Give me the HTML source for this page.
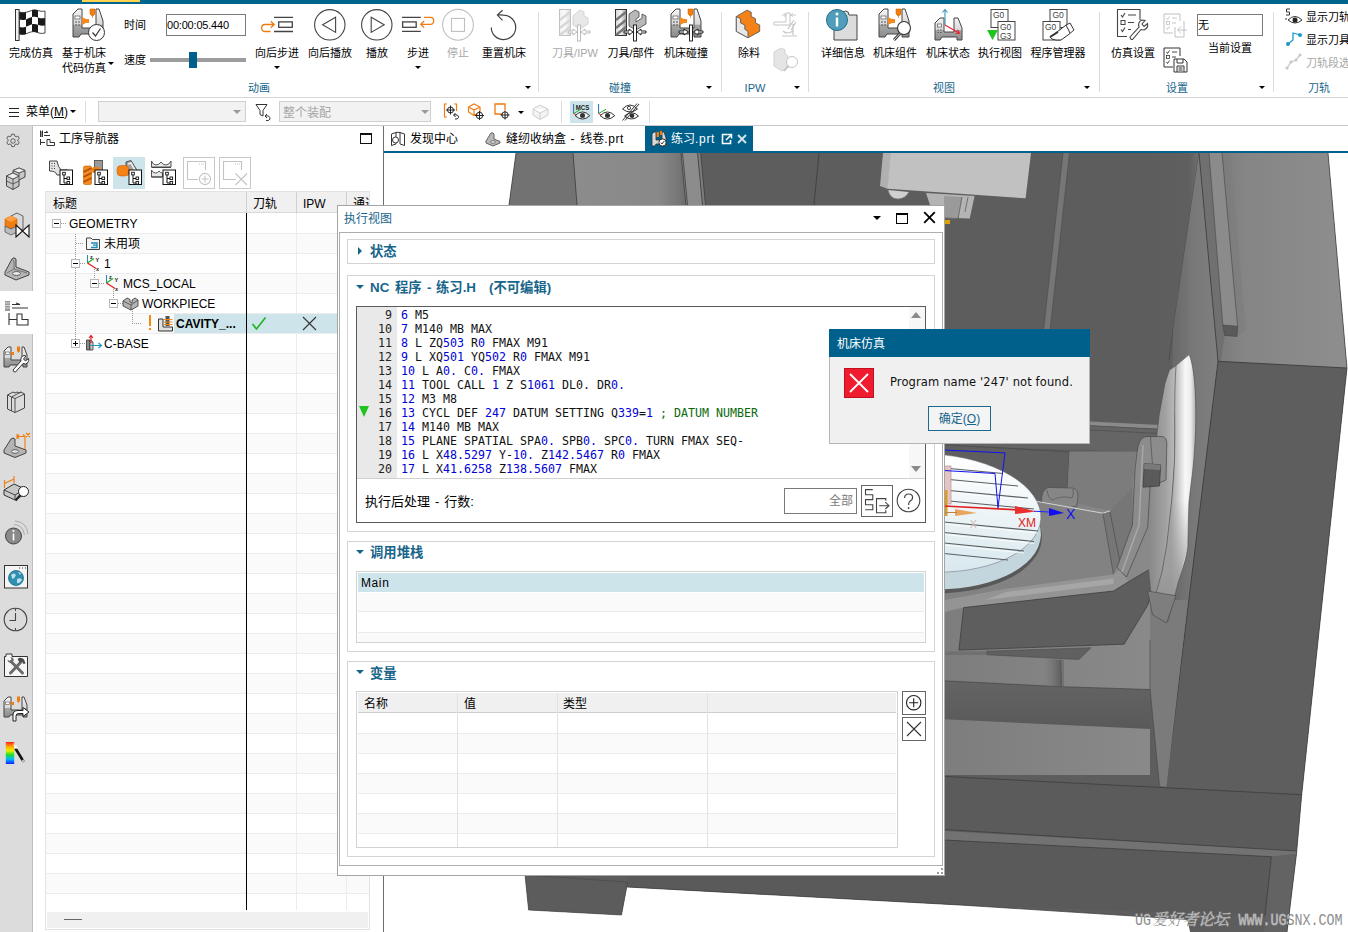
<!DOCTYPE html>
<html lang="zh-CN">
<head>
<meta charset="utf-8">
<title>NX - 机床仿真</title>
<style>
*{box-sizing:border-box;margin:0;padding:0}
html,body{width:1348px;height:932px;overflow:hidden;background:#fff}
body{position:relative;font-family:"Liberation Sans","Noto Sans CJK SC",sans-serif;font-size:12px;color:#000;line-height:1}
.a{position:absolute}
.t{position:absolute;white-space:nowrap;line-height:14px}
.c{position:absolute;white-space:nowrap;line-height:14px;text-align:center;transform:translateX(-50%)}
.rl{font-size:11px}
.teal{color:#17658a}
.gray{color:#a8a8a8}
svg{position:absolute;overflow:visible}
/* ribbon */
#topbar{left:0;top:0;width:1348px;height:4px;background:#00658c}
#topy{left:82px;top:0;width:58px;height:2px;background:#ffd350}
#ribbon{left:0;top:4px;width:1348px;height:94px;background:#fff;border-bottom:1px solid #d5d5d5}
.vsep{position:absolute;top:12px;width:1px;height:80px;background:#dcdcdc}
.dd{position:absolute;width:0;height:0;border-left:3px solid transparent;border-right:3px solid transparent;border-top:3px solid #000}
#toolbar{left:0;top:98px;width:1348px;height:28px;background:#fff;border-bottom:1px solid #c9c9c9}
.combo{position:absolute;top:101px;height:21px;background:#f2f2f2;border:1px solid #cfcfcf}
/* side */
#side{left:0;top:126px;width:33px;height:806px;background:#dcdcdc}
#nav{left:33px;top:126px;width:351px;height:806px;background:#fff}
/* tree */
.row{position:absolute;left:47px;width:323px;height:20px}
/* dialog */
#dlg{left:337px;top:205px;width:608px;height:671px;background:#fff;border:1px solid #a5a5a5}
.grp{position:absolute;border:1px solid #d4d4d4;background:#fff}
.gh{position:absolute;font-weight:bold;font-size:13.33px;color:#17658a;white-space:nowrap;line-height:16px}
.code{font-family:"DejaVu Sans Mono","Liberation Mono",monospace;font-size:11.63px;line-height:14px;white-space:pre}
.code b{font-weight:normal;color:#0000d8}
.code i{font-style:normal;color:#0a6a0a}
</style>
</head>
<body>

<div class="a" id="topbar"></div><div class="a" id="topy"></div>
<div class="a" id="ribbon"></div>
<svg width="0" height="0" style="left:0;top:0"><defs>
<linearGradient id="mg" x1="0" x2="0" y1="0" y2="1"><stop offset="0" stop-color="#f4f4f4"/><stop offset=".55" stop-color="#d8d8d8"/><stop offset=".56" stop-color="#a8a8a8"/><stop offset="1" stop-color="#8c8c8c"/></linearGradient>
<linearGradient id="og" x1="0" x2="1" y1="0" y2="1"><stop offset="0" stop-color="#ffa030"/><stop offset="1" stop-color="#e06000"/></linearGradient>
<linearGradient id="tg" x1="0" x2="1" y1="0" y2="0"><stop offset="0" stop-color="#d8d8d8"/><stop offset=".5" stop-color="#f2f2f2"/><stop offset="1" stop-color="#9a9a9a"/></linearGradient>
<g id="mach">
<path d="M1,29 V6 L6,1 H10 V20 H24 V1 H27 L31,13 V29 H24 V26 H9 L7,29 Z" fill="url(#mg)" stroke="#444" stroke-width="1"/>
<rect x="3" y="8" width="5" height="3" fill="#fff" stroke="#555" stroke-width=".7"/>
<path d="M3,14 H5 M6,14 H8 M3,17 H5 M6,17 H8" stroke="#555" stroke-width="1"/>
<path d="M18,1 H23 V6 L21,8 H20 L18,6 Z M20.5,8 V10" fill="#f07d10" stroke="#e06a00" stroke-width=".6"/>
<path d="M10,9 L14,11 L17,11 V15 L14,15 L10,17 Z" fill="#f58a20"/>
</g>
<g id="stair">
<path d="M3,8 L13,2 L17,4 V8 L21,10 V14 L25,16 V22 L14,28 L3,22 Z" fill="#f58216" stroke="#555" stroke-width=".8"/>
<path d="M3,8 L7,10 V14 L11,16 V20 L14,22 V28 L3,22 Z" fill="#e8e8e8" stroke="#555" stroke-width=".8"/>
</g>
</defs></svg>
<!-- group 1: animation -->
<svg style="left:14px;top:9px" width="32" height="32" viewBox="0 0 32 32"><rect x="1.5" y="0.5" width="3.6" height="31" fill="#f0f0f0" stroke="#333" stroke-width="1"/><path d="M5.5,3 C12,6 18,-1 24,1.5 C27,2.6 29,2.4 31,2 V24 C27,25 25,24 22,23 C16,21 12,27 5.5,25 Z" fill="#fff" stroke="#333" stroke-width=".9"/><path d="M5.5,3 C8,4 10,3.6 12,3 V10.4 C10,11 8,11.4 5.5,10.6 Z M12,10.4 C14,9.6 16,8.6 18,8 V15.2 C16,15.8 14,17 12,17.8 Z M18,8 V1 C20,0.7 22,0.8 24,1.5 V8.4 C22,7.6 20,7.5 18,8 Z M24,8.4 C26,9.2 28,9.6 31,9 V16.6 C28,17 26,16.6 24,15.8 Z M5.5,10.6 V18 C8,18.8 10,18.4 12,17.8 V25 C10,25.6 8,25.6 5.5,25 V18 M12,17.8 Z M18,15.2 C20,14.8 22,15 24,15.8 V23.6 C22,22.8 20,22.4 18,22.8 Z M5.5,18 C8,18.8 10,18.4 12,17.8 V25 C10,25.7 8,25.7 5.5,25 Z" fill="#1a1a1a"/></svg>
<div class="c rl" style="left:31px;top:46px">完成仿真</div>
<svg style="left:72px;top:8px" width="34" height="34" viewBox="0 0 34 34"><use href="#mach"/><circle cx="24.5" cy="24.5" r="8" fill="#fff" stroke="#333" stroke-width="1"/><path d="M20.5,24.5 L23.5,28 L28.5,20.5" fill="none" stroke="#333" stroke-width="1.2"/></svg>
<div class="c rl" style="left:84px;top:46px">基于机床</div>
<div class="c rl" style="left:84px;top:61px">代码仿真</div>
<div class="dd" style="left:108px;top:62px"></div>
<div class="t rl" style="left:124px;top:18px">时间</div>
<div class="a" style="left:166px;top:14px;width:80px;height:22px;border:1px solid #7a7a7a;background:#fff"></div>
<div class="t rl" style="left:167px;top:18px;letter-spacing:-.2px">00:00:05.440</div>
<div class="t rl" style="left:124px;top:53px">速度</div>
<div class="a" style="left:150px;top:58px;width:96px;height:4px;background:#9c9c9c"></div>
<div class="a" style="left:189px;top:52px;width:8px;height:16px;background:#00608c"></div>
<svg style="left:259px;top:9px" width="36" height="32" viewBox="259 9 36 32"><path d="M274,17.400 H293 M274,31.500 H293" stroke="#444" stroke-width="1.300"/><rect x="278.700" y="21.900" width="13.600" height="5.400" fill="none" stroke="#444" stroke-width="1.300"/><path d="M270.600,31.500 H265 Q261.700,31.500 261.700,28 Q261.700,24.500 265,24.500 H274 M270.800,21.200 L274.200,24.500 L270.800,27.800" fill="none" stroke="#ef7b10" stroke-width="1.300"/></svg>
<div class="c rl" style="left:277px;top:46px">向后步进</div>
<div class="dd" style="left:274px;top:66px"></div>
<svg style="left:314px;top:9px" width="32" height="32" viewBox="314 9 32 32"><circle cx="329.800" cy="24.800" r="15.200" fill="none" stroke="#444" stroke-width="1.100"/><path d="M335.600,17.300 V32.400 L322.600,24.800 Z" fill="none" stroke="#444" stroke-width="1.100"/></svg>
<div class="c rl" style="left:330px;top:46px">向后播放</div>
<svg style="left:361px;top:9px" width="32" height="32" viewBox="361 9 32 32"><circle cx="376.800" cy="24.800" r="15.200" fill="none" stroke="#444" stroke-width="1.100"/><path d="M371.200,17.300 V32.400 L384.200,24.800 Z" fill="none" stroke="#444" stroke-width="1.100"/></svg>
<div class="c rl" style="left:377px;top:46px">播放</div>
<svg style="left:400px;top:9px" width="36" height="32" viewBox="400 9 36 32"><path d="M402,17.300 H420.800 M402,31.300 H420.800" stroke="#444" stroke-width="1.300"/><rect x="402.600" y="21.900" width="13.600" height="5.400" fill="none" stroke="#444" stroke-width="1.300"/><path d="M424,17.300 H430.400 Q433.700,17.300 433.700,20.800 Q433.700,24.300 430.400,24.300 H421 M424.200,21 L420.800,24.300 L424.200,27.600" fill="none" stroke="#ef7b10" stroke-width="1.300"/></svg>
<div class="c rl" style="left:418px;top:46px">步进</div>
<div class="dd" style="left:415px;top:66px"></div>
<svg style="left:442px;top:9px" width="32" height="32" viewBox="442 9 32 32"><circle cx="458" cy="24.800" r="15.400" fill="none" stroke="#c0c0c0" stroke-width="1.100"/><rect x="451.500" y="18.400" width="13" height="13" fill="none" stroke="#c0c0c0" stroke-width="1.100"/></svg>
<div class="c rl gray" style="left:458px;top:46px">停止</div>
<svg style="left:488px;top:9px" width="32" height="34" viewBox="488 9 32 34"><path d="M502.500,10.300 L497.400,15.100 L502.500,20.400 M497.600,15.100 C500,14.700 502,15 503.500,15.200 A12.200,12.200 0 1 1 491.300,27.400" fill="none" stroke="#444" stroke-width="1.200"/></svg>
<div class="c rl" style="left:504px;top:46px">重置机床</div>
<div class="c rl teal" style="left:259px;top:81px">动画</div>
<div class="dd" style="left:525px;top:86px"></div>
<div class="vsep" style="left:538px"></div>
<!-- group 2: collision -->
<svg style="left:558px;top:8px;opacity:.33" width="34" height="34" viewBox="0 0 34 34"><rect x="1.5" y="1.5" width="11" height="26" fill="url(#tg)" stroke="#444"/><path d="M2,12 L12,4 M2,20 L12,12 M2,27 L12,19" stroke="#888" stroke-width="2.4"/><path d="M15,8 L22,2 L26,4 V8 L30,10 V16 L22,21 L15,17 Z" fill="#bbb" stroke="#666" stroke-width=".8"/><rect x="19.5" y="17" width="3" height="16" fill="#fff" stroke="#222" stroke-width=".9"/><path d="M10,23 H15 V21 L19,24 L15,27 V25 H10 Z M32,23 H27 V21 L23,24 L27,27 V25 H32 Z" fill="#fff" stroke="#222" stroke-width=".9"/></svg>
<div class="c rl gray" style="left:575px;top:46px">刀具/IPW</div>
<svg style="left:614px;top:8px" width="34" height="34" viewBox="0 0 34 34"><rect x="1.5" y="1.5" width="11" height="26" fill="url(#tg)" stroke="#333"/><path d="M2,12 L12,4 M2,20 L12,12 M2,27 L12,19" stroke="#777" stroke-width="2.4"/><path d="M15,6 L21,2 L25,4 V9 L22,11 V14 L28,10 V6 L32,8 V16 L22,22 L15,18 Z" fill="#b8b8b8" stroke="#444" stroke-width=".8"/><rect x="19.5" y="17" width="3" height="16" fill="#fff" stroke="#111" stroke-width=".9"/><path d="M10,23 H15 V21 L19,24 L15,27 V25 H10 Z M32,23 H27 V21 L23,24 L27,27 V25 H32 Z" fill="#fff" stroke="#111" stroke-width=".9"/></svg>
<div class="c rl" style="left:631px;top:46px">刀具/部件</div>
<svg style="left:670px;top:8px" width="34" height="34" viewBox="0 0 34 34"><use href="#mach"/><rect x="19.5" y="17" width="3" height="16" fill="#fff" stroke="#111" stroke-width=".9"/><path d="M9,23 H14 V21 L18.5,24 L14,27 V25 H9 Z M33,23 H28 V21 L23.5,24 L28,27 V25 H33 Z" fill="#fff" stroke="#111" stroke-width=".9"/></svg>
<div class="c rl" style="left:686px;top:46px">机床碰撞</div>
<div class="c rl teal" style="left:620px;top:81px">碰撞</div>
<div class="dd" style="left:706px;top:86px"></div>
<div class="vsep" style="left:721px"></div>
<!-- group 3: IPW -->
<svg style="left:733px;top:8px" width="30" height="34" viewBox="0 0 28 32"><use href="#stair"/></svg>
<div class="c rl" style="left:749px;top:46px">除料</div>
<svg style="left:773px;top:12px;opacity:.3" width="26" height="26" viewBox="0 0 26 26"><path d="M1,10 H13 V1 H17 V13 H1 Z" fill="#fff" stroke="#444"/><path d="M9,3 H13 M17,3 H23 M11,1.5 L13,3 L11,4.5 M20,1.5 L18,3 L20,4.5" stroke="#444" fill="none" stroke-width=".9"/><path d="M21,8 L15,17 M23,10 L18,18 M10,19 Q14,23 20,19 M9,24 H24 M20,12 V23" stroke="#444" fill="none" stroke-width="1.2"/></svg>
<svg style="left:773px;top:46px;opacity:.3" width="28" height="28" viewBox="0 0 28 28"><path d="M1,6 L8,2 L12,4 V8 L15,10 V14 L18,15 V20 L9,25 L1,20 Z" fill="#aaa" stroke="#555" stroke-width=".8"/><circle cx="19" cy="16" r="5.5" fill="#fff" stroke="#444" stroke-width="1"/><path d="M15,20 L11,25" stroke="#444" stroke-width="2"/></svg>
<div class="c rl teal" style="left:755px;top:81px">IPW</div>
<div class="dd" style="left:794px;top:86px"></div>
<div class="vsep" style="left:808px"></div>
<!-- group 4: view -->
<svg style="left:826px;top:8px" width="34" height="34" viewBox="0 0 34 34"><path d="M8,7 H16 Q16,3 19.5,3 Q23,3 23,7 H31 V32 H8 V22 Q12,22 12,18.5 Q12,15 8,15 Z" fill="#dcdcdc" stroke="#444" stroke-width="1"/><circle cx="11" cy="12" r="10.5" fill="#4f9db8" stroke="#1e6d8c" stroke-width="1"/><rect x="9.8" y="9.5" width="2.4" height="9" fill="#fff"/><circle cx="11" cy="6" r="1.5" fill="#fff"/></svg>
<div class="c rl" style="left:843px;top:46px">详细信息</div>
<svg style="left:878px;top:8px" width="36" height="34" viewBox="0 0 36 34"><use href="#mach"/><circle cx="26" cy="20" r="6.5" fill="#fff" stroke="#333" stroke-width="1.1"/><path d="M22,25.5 L16,32" stroke="#333" stroke-width="2.6"/><path d="M22,25.5 L16,32" stroke="#fff" stroke-width=".9"/></svg>
<div class="c rl" style="left:895px;top:46px">机床组件</div>
<svg style="left:934px;top:8px" width="30" height="34" viewBox="0 0 30 34"><path d="M1,32 V15 L6,10 H10 V24 H20 V10 H24 L28,20 V32 H23 V29 H8 L6,32 Z" fill="url(#mg)" stroke="#444" stroke-width="1"/><rect x="3.5" y="16" width="4" height="3" fill="#fff" stroke="#555" stroke-width=".7"/><path d="M3.5,22 H5 M6,22 H7.5 M3.5,24.500 H5 M6,24.500 H7.5" stroke="#555" stroke-width=".9"/><path d="M11,17 V2 M8.500,4.500 L11,1.500 L13.500,4.500" stroke="#3b96b8" stroke-width="1.100" fill="none"/><path d="M11,17 L25,25 M21.500,25.500 L25.500,25.300 L23.500,21.800" stroke="#e82030" stroke-width="1.100" fill="none"/></svg>
<div class="c rl" style="left:948px;top:46px">机床状态</div>
<svg style="left:986px;top:8px" width="32" height="34" viewBox="0 0 32 34"><rect x="5" y="1.500" width="17" height="18" fill="#fff" stroke="#444" stroke-width="1"/><text x="7" y="10" font-family="Liberation Sans,sans-serif" font-size="8.500" fill="#444">G0</text><rect x="12" y="13.500" width="17" height="18.500" fill="#fff" stroke="#444" stroke-width="1"/><text x="14" y="22" font-family="Liberation Sans,sans-serif" font-size="8.500" fill="#444">G0</text><text x="14" y="30.500" font-family="Liberation Sans,sans-serif" font-size="8.500" fill="#444">G3</text><path d="M1,22 H12 L6.500,32 Z" fill="#1fc41f"/></svg>
<div class="c rl" style="left:1000px;top:46px">执行视图</div>
<svg style="left:1041px;top:8px" width="34" height="34" viewBox="0 0 34 34"><rect x="9" y="1.500" width="17" height="18" fill="#fff" stroke="#444" stroke-width="1"/><text x="11.500" y="10" font-family="Liberation Sans,sans-serif" font-size="8.500" fill="#444">G0</text><rect x="2" y="13.500" width="17" height="18.500" fill="#fff" stroke="#444" stroke-width="1"/><text x="4" y="22" font-family="Liberation Sans,sans-serif" font-size="8.500" fill="#444">G0</text><path d="M9,29 L20,21 L25,17 L29,15 L33,22 L27,27 L20,32 L15,32 L11,31 Z" fill="#fff" stroke="#333" stroke-width="1"/><path d="M25,17 L29,25" stroke="#333" stroke-width="1"/><path d="M9,29 L17,24" stroke="#333" stroke-width="2"/></svg>
<div class="c rl" style="left:1058px;top:46px">程序管理器</div>
<div class="c rl teal" style="left:944px;top:81px">视图</div>
<div class="dd" style="left:1084px;top:86px"></div>
<div class="vsep" style="left:1099px"></div>
<!-- group 5: settings -->
<svg style="left:1116px;top:8px" width="34" height="34" viewBox="0 0 34 34"><path d="M24,12 V1.500 H1.500 V28.500 H11" fill="none" stroke="#444" stroke-width="1.100"/><path d="M5,7 L6.500,9 L9,5 M12,7 H20 M12,14.500 H18 M5,21.500 L6.500,23.500 L9,19.500 M12,21.500 H15" stroke="#444" stroke-width="1.100" fill="none"/><rect x="5" y="12.500" width="4" height="4" fill="none" stroke="#444" stroke-width="1"/><path d="M14,29 L23,19 Q21.500,14 26,12 L29,12.500 L26,16 L28,18.500 L31.500,15.500 Q32.500,20 28,22 L25,21.500 L16.500,31.500 Q14.500,32 14,29 Z" fill="#fff" stroke="#444" stroke-width="1.100"/></svg>
<div class="c rl" style="left:1133px;top:46px">仿真设置</div>
<svg style="left:1163px;top:13px;opacity:.32" width="26" height="26" viewBox="0 0 26 26"><path d="M17,8 V1 H1 V20 H10" fill="none" stroke="#444"/><path d="M3.500,5 L4.500,6.500 L6.500,3.500 M9,5 H14 M9,10 H13 M3.500,15 L4.500,16.500 L6.500,13.500" stroke="#444" fill="none" stroke-width=".9"/><rect x="3.500" y="8.500" width="3" height="3" fill="none" stroke="#444" stroke-width=".8"/><path d="M21,8 V24 H12 V14 M24,17 H15 M18,13.500 L14.500,17 L18,20.500" fill="none" stroke="#444"/></svg>
<svg style="left:1163px;top:47px" width="26" height="26" viewBox="0 0 26 26"><path d="M17,9 V1 H1 V20 H10" fill="none" stroke="#333"/><path d="M3.500,5 L4.500,6.500 L6.500,3.500 M9,5 H14 M9,10 H13 M3.500,15 L4.500,16.500 L6.500,13.500" stroke="#333" fill="none" stroke-width=".9"/><rect x="3.500" y="8.500" width="3" height="3" fill="none" stroke="#333" stroke-width=".8"/><path d="M11,12 H21 L24,15 V25 H11 Z M14,12 V16 H20 V12 M14,25 V19 H21 V25 M15.500,21 H19.500 M15.500,23 H19.500" fill="#fff" stroke="#333"/></svg>
<div class="a" style="left:1197px;top:14px;width:66px;height:22px;border:1px solid #7a7a7a;background:#fff"></div>
<div class="t rl" style="left:1198px;top:18px">无</div>
<div class="c rl" style="left:1230px;top:41px">当前设置</div>
<div class="c rl teal" style="left:1177px;top:81px">设置</div>
<div class="dd" style="left:1259px;top:86px"></div>
<div class="vsep" style="left:1273px"></div>
<!-- group 6: toolpath -->
<svg style="left:1284px;top:7px" width="20" height="20" viewBox="0 0 20 20"><path d="M6,2 H2.500 V5 H5.500 V8 H2" fill="none" stroke="#333" stroke-width="1"/><path d="M4,13 Q11,6 18,13 Q11,19 4,13 Z" fill="#fff" stroke="#333" stroke-width="1"/><circle cx="11" cy="13" r="2.500" fill="#222"/><path d="M2,11 V13" stroke="#333"/></svg>
<div class="t rl" style="left:1306px;top:10px">显示刀轨</div>
<svg style="left:1284px;top:30px" width="20" height="20" viewBox="0 0 20 20"><path d="M4,14 L9,10 V3 L16,5" fill="none" stroke="#1b9ac8" stroke-width="1.300"/><circle cx="4" cy="14" r="2" fill="#1b9ac8"/><circle cx="16" cy="5" r="2" fill="#1b9ac8"/></svg>
<div class="t rl" style="left:1306px;top:33px">显示刀具</div>
<svg style="left:1284px;top:52px;opacity:.35" width="20" height="20" viewBox="0 0 20 20"><path d="M3,16 L7,10 L12,8 L16,3" fill="none" stroke="#666" stroke-width="1.300"/><circle cx="3" cy="16" r="1.600" fill="#666"/><circle cx="7" cy="10" r="1.600" fill="#666"/><circle cx="12" cy="8" r="1.600" fill="#666"/><circle cx="16" cy="3" r="1.600" fill="#666"/></svg>
<div class="t rl gray" style="left:1306px;top:56px">刀轨段选</div>
<div class="c rl teal" style="left:1319px;top:81px">刀轨</div>

<div class="a" id="toolbar"></div>
<div class="a" style="left:9px;top:108px;width:10px;height:1px;background:#222;box-shadow:0 4px 0 #222,0 8px 0 #222"></div>
<div class="t" style="left:26px;top:105px">菜单(<span style="text-decoration:underline">M</span>)</div>
<div class="dd" style="left:70px;top:110px"></div>
<div class="a" style="left:85px;top:101px;width:1px;height:22px;background:#dcdcdc"></div>
<div class="combo" style="left:98px;width:148px"></div>
<div class="dd" style="left:233px;top:110px;border-top-color:#9a9a9a;border-left-width:4px;border-right-width:4px;border-top-width:4px"></div>
<svg style="left:254px;top:102px" width="20" height="20" viewBox="0 0 20 20"><path d="M2,2.500 H13 L9,8.500 V14 L6,12.500 V8.500 Z" fill="none" stroke="#333" stroke-width="1"/><path d="M11,14 Q16,13 16,17 Q15.500,19 12,18.500 M13,12 L11,14 L13,16" fill="none" stroke="#333" stroke-width="1"/></svg>
<div class="combo" style="left:279px;width:152px"></div>
<div class="t" style="left:283px;top:106px;color:#a6a6a6">整个装配</div>
<div class="dd" style="left:421px;top:110px;border-top-color:#9a9a9a;border-left-width:4px;border-right-width:4px;border-top-width:4px"></div>
<svg style="left:443px;top:102px" width="20" height="20" viewBox="0 0 20 20"><path d="M4,2 H1.500 V15 H4 M11,2 H13.500 V9" fill="none" stroke="#ef7b10" stroke-width="1.200"/><circle cx="7.500" cy="8" r="3" fill="none" stroke="#222" stroke-width="1"/><path d="M7.500,3.500 V12.500 M3,8 H12" stroke="#222" stroke-width="1"/><path d="M11,13 Q15.500,12 15.500,15.500 Q15,17.500 12,17 M12.500,11 L10.500,13 L12.500,15" fill="none" stroke="#222" stroke-width="1"/></svg>
<svg style="left:467px;top:102px" width="20" height="20" viewBox="0 0 20 20"><path d="M1.500,5 L7,2 L13,5 V10 L7,13.500 L1.500,10 Z M1.500,5 L7,8 L13,5 M7,8 V13.500" fill="none" stroke="#ef7b10" stroke-width="1.200"/><circle cx="12.500" cy="13.500" r="3.200" fill="#fff" stroke="#222" stroke-width="1"/><path d="M12.500,9 V18 M8,13.500 H17" stroke="#222" stroke-width="1"/></svg>
<svg style="left:493px;top:102px" width="20" height="20" viewBox="0 0 20 20"><path d="M9,12 H2 V2 H12 V8" fill="none" stroke="#ef7b10" stroke-width="1.300"/><circle cx="12" cy="13" r="3.200" fill="#fff" stroke="#222" stroke-width="1"/><path d="M12,8.500 V17.500 M7.500,13 H16.500" stroke="#222" stroke-width="1"/></svg>
<div class="dd" style="left:518px;top:111px"></div>
<svg style="left:532px;top:103px;opacity:.35" width="18" height="18" viewBox="0 0 18 18"><path d="M1,6 L8,2 L16,6 V12 L8,16.500 L1,12 Z M1,6 L8,10 L16,6 M8,10 V16.500" fill="#ddd" stroke="#777" stroke-width="1"/></svg>
<div class="a" style="left:561px;top:101px;width:1px;height:22px;background:#dcdcdc"></div>
<div class="a" style="left:570px;top:101px;width:23px;height:22px;background:#cde4ea"></div>
<svg style="left:571px;top:102px" width="22" height="20" viewBox="0 0 22 20"><text x="4.800" y="8" font-family="Liberation Sans,sans-serif" font-size="6.500" font-weight="bold" fill="#222" textLength="13.500" lengthAdjust="spacingAndGlyphs">MCS</text><path d="M2.600,2 V11.500" stroke="#2a6ab0" stroke-width="1"/><path d="M2.600,11.500 L10,7.300" stroke="#1fb41f" stroke-width="1"/><path d="M2.600,11.500 L5.400,13.200" stroke="#e02020" stroke-width="1"/><path d="M4.200,13.700 Q11.400,6.200 18.800,13.700 Q11.400,20.400 4.200,13.700 Z" fill="#fff" fill-opacity=".6" stroke="#333" stroke-width="1"/><circle cx="11.500" cy="13.500" r="2.500" fill="#333"/></svg>
<svg style="left:596px;top:102px" width="22" height="20" viewBox="0 0 22 20"><path d="M2.600,2 V11.500" stroke="#2a6ab0" stroke-width="1"/><path d="M2.600,11.500 L10,7.300" stroke="#1fb41f" stroke-width="1"/><path d="M2.600,11.500 L5.400,13.200" stroke="#e02020" stroke-width="1"/><path d="M4.200,13.700 Q11.400,6.200 18.800,13.700 Q11.400,20.400 4.200,13.700 Z" fill="#fff" stroke="#333" stroke-width="1"/><circle cx="11.500" cy="13.500" r="2.500" fill="#333"/></svg>
<svg style="left:621px;top:102px" width="20" height="20" viewBox="0 0 20 20"><path d="M1.500,7 Q9,-1 16.500,7 Q9,13 1.500,7 Z" fill="none" stroke="#333" stroke-width="1"/><circle cx="8" cy="6" r="1.600" fill="none" stroke="#333" stroke-width=".9"/><path d="M3.500,14 Q10.500,7.500 17.500,14 Q10.500,20 3.500,14 Z" fill="#fff" stroke="#333" stroke-width="1"/><circle cx="11" cy="13.800" r="2.300" fill="#333"/><path d="M1.500,18.500 L16,1.500 M4,18.500 L18,2" stroke="#333" stroke-width="1"/></svg>
<div class="a" style="left:649px;top:101px;width:1px;height:22px;background:#dcdcdc"></div>

<div class="a" id="side"></div>
<div class="a" style="left:32px;top:126px;width:1px;height:806px;background:#bdbdbd"></div>
<div class="a" style="left:0;top:291px;width:34px;height:43px;background:#fff"></div>
<svg style="left:5px;top:133px" width="16" height="16" viewBox="0 0 20 20"><path d="M8.300,1.500 h3.400 l.5,2.300 l1.700,.9 l2.200,-.9 l1.700,2.900 l-1.700,1.500 v2 l1.700,1.500 l-1.700,2.900 l-2.200,-.9 l-1.700,.9 l-.5,2.300 h-3.400 l-.5,-2.300 l-1.700,-.9 l-2.200,.9 l-1.700,-2.900 l1.700,-1.500 v-2 l-1.700,-1.500 l1.700,-2.900 l2.200,.9 l1.700,-.9 Z" fill="none" stroke="#444" stroke-width="1"/><circle cx="10" cy="10" r="2.800" fill="none" stroke="#444" stroke-width="1"/></svg>
<svg style="left:5px;top:167px" width="22" height="24" viewBox="0 0 22 24"><path d="M1.500,9 L8,6 L8,3.500 L14,1 L20,3.500 V10 L14,13 V19 L8,22.500 L1.500,19 Z" fill="#c8c8c8" stroke="#444" stroke-width="1"/><path d="M1.500,9 L8,12 L14,9 L8,6 M8,12 V22.500 M14,9 V13 M8,3.500 L14,6 L20,3.500 M14,6 V9 M1.500,14 L8,17 L14,14" fill="none" stroke="#444" stroke-width=".8"/><path d="M8,3.500 L14,1 L20,3.500 L14,6 Z M1.500,9 L8,6 L14,9 L8,12 Z" fill="#eee" stroke="#444" stroke-width=".8"/></svg>
<svg style="left:3px;top:211px" width="28" height="28" viewBox="0 0 28 28"><path d="M8,5 L14,2 L20,5 V18 L14,21 L8,18" fill="#d8d8d8" stroke="#555" stroke-width=".9"/><path d="M2,8 L8,5 L14,8 V15 L8,18 L2,15 Z" fill="#f07d10" stroke="#c86000" stroke-width=".6"/><path d="M2,8 L8,5 L14,8 L8,11 Z" fill="#ffa040"/><path d="M2,15 L8,18 L14,15 V21 L8,24 L2,21 Z" fill="#bcbcbc" stroke="#555" stroke-width=".8"/><path d="M13,14 V26 L26,14 V26 Z" fill="#fff" stroke="#111" stroke-width="1.100"/></svg>
<svg style="left:3px;top:255px" width="28" height="26" viewBox="0 0 28 26"><path d="M2,17 L9,4 Q11,1.500 13,4 V12 L26,17 V20 L13,25 L2,20 Z" fill="#b4b4b4" stroke="#444" stroke-width="1"/><path d="M9,4 L11,6 V14 L4,18 M11,14 L24,18" fill="none" stroke="#666" stroke-width=".8"/><ellipse cx="13.500" cy="18.500" rx="4" ry="2" fill="#e8e8e8" stroke="#444" stroke-width=".8"/></svg>
<svg style="left:4px;top:300px" width="26" height="26" viewBox="0 0 26 26"><rect x="1" y="1" width="5" height="10" fill="#999"/><path d="M1,3 h5 M1,5.500 h5 M1,8 h5" stroke="#ddd" stroke-width=".9"/><path d="M8,4.500 H16 L12,3 M8,8 H24 M5,13 V25 M5,19.500 H13 M13,25 V14 H18 V19.500 H24 V25 Z" fill="none" stroke="#333" stroke-width="1.100"/></svg>
<svg style="left:3px;top:345px" width="28" height="28" viewBox="0 0 28 28"><path d="M1,22 V6 L5,2 H8 V15 H19 V2 H21 L24,10 V22 H20 V20 H7 L6,22 Z" fill="url(#mg)" stroke="#444" stroke-width="1"/><rect x="2.500" y="7" width="4" height="2.500" fill="#fff" stroke="#555" stroke-width=".6"/><path d="M8,7 H11 V10 H8 M14,1.500 H17 V6 L15.500,8 L14,6 Z" fill="#f07d10"/><path d="M10,25 L18,16 Q17,12 21,10.500 L23,11 L20.500,14 L22.500,16 L25.500,13.500 Q26.500,17.500 22.500,19 L20,18.500 L12.500,27 Q10.500,27.500 10,25 Z" fill="#fff" stroke="#333" stroke-width="1"/></svg>
<svg style="left:6px;top:389px" width="20" height="25" viewBox="0 0 20 25"><path d="M1.500,6 L7,3 L9,4 L11,3 L13,4 L15,3 L18.500,5 V19 L9,23.500 L1.500,20 Z" fill="#dcdcdc" stroke="#444" stroke-width="1"/><path d="M1.500,6 L5.500,8 V22 M5.500,8 L9,9.500 V23.500 M9,9.500 L18.500,5 M5.500,8 L15,3" fill="none" stroke="#444" stroke-width=".9"/></svg>
<svg style="left:3px;top:431px" width="28" height="28" viewBox="0 0 28 28"><path d="M1,19 L8,8 Q10,6 12,8 V15 L23,19 V22 L12,26.500 L1,22 Z" fill="#b4b4b4" stroke="#444" stroke-width="1"/><ellipse cx="12" cy="20.500" rx="3.600" ry="1.800" fill="#e8e8e8" stroke="#444" stroke-width=".8"/><path d="M14,3 V8 M14,5.500 H22 M22,5.500 V18 M16,3.500 L14,5.500 L16,7.500 M20,3.500 L22,5.500 M23,2 L27,6 M27,2 L23,6" fill="none" stroke="#f07d10" stroke-width="1.100"/></svg>
<svg style="left:3px;top:475px" width="28" height="28" viewBox="0 0 28 28"><path d="M1,15 L11,9 L22,14 V19 L12,25 L1,20 Z" fill="#c8c8c8" stroke="#333" stroke-width="1"/><path d="M1,15 L12,20 L22,14 M12,20 V25" fill="none" stroke="#333" stroke-width=".9"/><path d="M1.500,5 V13 M11,1 V8 M1.500,8.500 L11,4" fill="none" stroke="#f07d10" stroke-width="1.100"/><circle cx="20.500" cy="16.500" r="5" fill="#fff" stroke="#222" stroke-width="1"/><path d="M17,20.500 L12.500,25.500" stroke="#222" stroke-width="2.200"/></svg>
<svg style="left:3px;top:519px" width="28" height="28" viewBox="0 0 28 28"><circle cx="10.500" cy="17" r="8" fill="#8a8a8a" stroke="#444" stroke-width="1"/><rect x="9.700" y="14.500" width="1.600" height="7" fill="#fff"/><circle cx="10.500" cy="12" r="1.100" fill="#fff"/><path d="M11,5.500 Q20,6 21.500,16 M12,2 Q24,3 25,15" fill="none" stroke="#aaa" stroke-width="1"/></svg>
<svg style="left:3px;top:564px" width="26" height="26" viewBox="0 0 26 26"><rect x="1.500" y="1.500" width="23" height="22.500" fill="#f4f4f4" stroke="#333" stroke-width="1"/><path d="M16,4 h1 m2,0 h1 m2,0 h1" stroke="#333" stroke-width="1"/><circle cx="13" cy="14" r="7.500" fill="#2e8fb0" stroke="#1a6a88" stroke-width=".8"/><path d="M8,11 Q11,8 13,11 Q12,14 9.500,15 Z M14,15 Q18,13 19,16 Q17,20 14,19 Z M15,8 L18,9 L17,11 Z" fill="#bfe0ea"/></svg>
<svg style="left:3px;top:607px" width="26" height="26" viewBox="0 0 26 26"><circle cx="12.500" cy="12.500" r="11.300" fill="none" stroke="#444" stroke-width="1.100"/><path d="M12.500,1.500 V4 M12.500,21 V23.500 M12.500,6 V13.500 H6.500" fill="none" stroke="#444" stroke-width="1.100"/></svg>
<svg style="left:3px;top:651px" width="26" height="27" viewBox="0 0 26 27"><path d="M1.500,5.500 H3 V3 H9 V5.500 H24.500 V25.500 H1.500 Z" fill="#f6f6f6" stroke="#333" stroke-width="1"/><path d="M8,10.500 L19.500,22" stroke="#6a6a6a" stroke-width="3" stroke-linecap="round"/><path d="M4.500,8.500 Q5,12.500 9,11.500 L10.500,10 Q11.500,6.500 7.500,6 L8.500,8.500 L6.500,10 Z" fill="#6a6a6a"/><path d="M18,11 L7.500,22" stroke="#6a6a6a" stroke-width="3" stroke-linecap="round"/><path d="M14.500,8 Q18,5.500 21,8.500 L22.500,12.500 L20.500,13 L19,10.500 L16.500,11.500 Z" fill="#4a4a4a"/></svg>
<svg style="left:3px;top:695px" width="28" height="28" viewBox="0 0 28 28"><path d="M1,22 V6 L5,2 H8 V15 H19 V2 H21 L24,10 V22 H20 V20 H7 L6,22 Z" fill="url(#mg)" stroke="#444" stroke-width="1"/><rect x="2.500" y="7" width="4" height="2.500" fill="#fff" stroke="#555" stroke-width=".6"/><path d="M8,7 H11 V10 H8 M14,1.500 H17 V6 L15.500,8 L14,6 Z" fill="#f07d10"/><path d="M10,26 V20 Q10,15.500 15,15.500 H20 V12.500 L26,17 L20,21.500 V18.500 H15.500 Q13,18.500 13,21 V26 Z" fill="#fff" stroke="#222" stroke-width="1"/></svg>
<svg style="left:4px;top:739px" width="24" height="28" viewBox="0 0 24 28"><defs><linearGradient id="rb" x1="0" x2="0" y1="0" y2="1"><stop offset="0" stop-color="#ff2020"/><stop offset=".22" stop-color="#ffb000"/><stop offset=".4" stop-color="#e8f000"/><stop offset=".58" stop-color="#20e020"/><stop offset=".78" stop-color="#00b8ff"/><stop offset="1" stop-color="#1020ff"/></linearGradient></defs><rect x="1.800" y="3" width="8.400" height="22" fill="url(#rb)"/><path d="M11.500,9.500 L19.500,22.500" stroke="#111" stroke-width="2.600"/><path d="M18.500,21 L20,23.500" stroke="#bbb" stroke-width="2.600"/><path d="M8,5 L10.500,8 L9,4 L12,7.500 L12.500,4.500 L12.500,8.500 L15,7.500 L12,10 Z" fill="#fff"/></svg>

<div class="a" id="nav"></div>
<svg style="left:39px;top:130px" width="17" height="16" viewBox="0 0 17 16"><path d="M1.500,0.500 V7 M3.500,0.500 V7 M1.500,2 H3.500 M1.500,4 H3.500 M1.500,6 H3.500 M5,2.500 H9 L7,1 M5,5.500 H11 M1.500,9 V15 M1.500,12.500 H6 M8,15.500 V9.500 H11 V12.500 H15.500 V15.500 Z" fill="none" stroke="#333" stroke-width="1"/></svg>
<div class="t" style="left:59px;top:132px">工序导航器</div>
<div class="a" style="left:360px;top:133px;width:12px;height:11px;border:1px solid #111;border-top-width:2px"></div>
<svg style="left:48px;top:159px" width="27" height="27" viewBox="0 0 27 27"><path d="M1.500,2 H9 Q10,8 13,11 L20,11 V16 H9 Q8,12 1.500,12 Z" fill="#e4e4e4" stroke="#444" stroke-width="1"/><path d="M3.500,4.500 h1 m1.500,0 h1 M3.500,7 h1 m1.500,0 h1 M3.500,9.500 h1 m1.500,0 h1" stroke="#444" stroke-width="1"/><rect x="12" y="11" width="12.500" height="14.500" fill="#fff" stroke="#111" stroke-width="1"/><path d="M16,16 v8 h3 M16,19.5 h3" fill="none" stroke="#111" stroke-width="1"/><rect x="19" y="18" width="2.600" height="2.600" fill="#fff" stroke="#111" stroke-width=".9"/><rect x="19" y="22.5" width="2.600" height="2.600" fill="#fff" stroke="#111" stroke-width=".9"/><rect x="14.7" y="13.3" width="2.600" height="2.600" fill="#fff" stroke="#111" stroke-width=".9"/></svg>
<svg style="left:82px;top:159px" width="27" height="27" viewBox="0 0 27 27"><rect x="12.500" y="1.500" width="8" height="12" fill="#9a9a9a" stroke="#444" stroke-width=".8"/><rect x="10" y="8" width="8" height="6" rx="2" fill="#f07d10"/><rect x="1.500" y="7" width="8" height="18.500" rx="1.500" fill="#f58a20" stroke="#c86000" stroke-width=".6"/><path d="M1.500,13 L9.500,9 M1.500,18 L9.500,14 M1.500,23 L9.500,19" stroke="#b05000" stroke-width="1.600"/><rect x="13" y="11" width="12.500" height="14.500" fill="#fff" stroke="#111" stroke-width="1"/><path d="M17,16 v8 h3 M17,19.5 h3" fill="none" stroke="#111" stroke-width="1"/><rect x="20" y="18" width="2.600" height="2.600" fill="#fff" stroke="#111" stroke-width=".9"/><rect x="20" y="22.5" width="2.600" height="2.600" fill="#fff" stroke="#111" stroke-width=".9"/><rect x="15.7" y="13.3" width="2.600" height="2.600" fill="#fff" stroke="#111" stroke-width=".9"/></svg>
<div class="a" style="left:113px;top:157px;width:32px;height:32px;background:#cde4ea"></div>
<svg style="left:116px;top:159px" width="27" height="27" viewBox="0 0 27 27"><path d="M10,3 L15,1.500 L22,13 V20 L17,22 L10,10 Z" fill="#a0a0a0" stroke="#444" stroke-width=".9"/><path d="M12,5 L15,4 L20,13 V18" fill="none" stroke="#eee" stroke-width="1.600"/><rect x="1" y="6.500" width="12" height="10.500" rx="4" fill="#f58216" stroke="#d06000" stroke-width=".6"/><rect x="13" y="11" width="12.500" height="14.500" fill="#fff" stroke="#111" stroke-width="1"/><path d="M17,16 v8 h3 M17,19.5 h3" fill="none" stroke="#111" stroke-width="1"/><rect x="20" y="18" width="2.600" height="2.600" fill="#fff" stroke="#111" stroke-width=".9"/><rect x="20" y="22.5" width="2.600" height="2.600" fill="#fff" stroke="#111" stroke-width=".9"/><rect x="15.7" y="13.3" width="2.600" height="2.600" fill="#fff" stroke="#111" stroke-width=".9"/></svg>
<svg style="left:150px;top:159px" width="27" height="27" viewBox="0 0 27 27"><path d="M1.500,2 Q3,6 6,6 Q9,6 11,3 Q13,6 16,6 Q19,6 21,2 V8 H1.500 Z" fill="#e8e8e8" stroke="#444" stroke-width=".9"/><path d="M1.500,11 Q3,14 5.500,14 Q8,14 9,12 Q10.500,14 12.500,14 V18 H1.500 Z" fill="#e8e8e8" stroke="#444" stroke-width=".9"/><path d="M1.500,8.500 H21 M1.500,18 H12" stroke="#444" stroke-width="1"/><rect x="13" y="11" width="12.500" height="14.500" fill="#fff" stroke="#111" stroke-width="1"/><path d="M17,16 v8 h3 M17,19.5 h3" fill="none" stroke="#111" stroke-width="1"/><rect x="20" y="18" width="2.600" height="2.600" fill="#fff" stroke="#111" stroke-width=".9"/><rect x="20" y="22.5" width="2.600" height="2.600" fill="#fff" stroke="#111" stroke-width=".9"/><rect x="15.7" y="13.3" width="2.600" height="2.600" fill="#fff" stroke="#111" stroke-width=".9"/></svg>
<div class="a" style="left:183px;top:157px;width:32px;height:32px;border:1px solid #c8c8c8"></div>
<svg style="left:183px;top:157px" width="32" height="32" viewBox="0 0 32 32"><path d="M15,22.500 H4.500 V4.500 H22.500 V13" fill="none" stroke="#c4c4c4" stroke-width="1.100"/><path d="M16,7 h1 m1,0 h1 m1,0 h1" stroke="#c4c4c4"/><circle cx="22" cy="22" r="5.600" fill="#fff" stroke="#c4c4c4" stroke-width="1.100"/><path d="M22,18.500 V25.500 M18.500,22 H25.500" stroke="#c4c4c4" stroke-width="1.100"/></svg>
<div class="a" style="left:219px;top:157px;width:32px;height:32px;border:1px solid #c8c8c8"></div>
<svg style="left:219px;top:157px" width="32" height="32" viewBox="0 0 32 32"><path d="M17,22.500 H4.500 V4.500 H22.500 V13" fill="none" stroke="#c4c4c4" stroke-width="1.100"/><path d="M16,7 h1 m1,0 h1 m1,0 h1" stroke="#c4c4c4"/><path d="M16.500,16.500 L28,28 M28,16.500 L16.500,28" stroke="#c4c4c4" stroke-width="1.100"/></svg>
<div class="a" style="left:45px;top:191px;width:325px;height:739px;border:1px solid #e2e2e2;background:#fff"></div>
<div class="a" style="left:46px;top:192px;width:323px;height:21px;background:#f0f0f0;border-bottom:1px solid #dadada"></div>
<div class="a" style="left:246px;top:192px;width:1px;height:21px;background:#d0d0d0"></div>
<div class="a" style="left:296px;top:192px;width:1px;height:21px;background:#d0d0d0"></div>
<div class="a" style="left:346px;top:192px;width:1px;height:21px;background:#d0d0d0"></div>
<div class="t" style="left:53px;top:197px">标题</div>
<div class="t" style="left:253px;top:197px">刀轨</div>
<div class="t" style="left:303px;top:197px">IPW</div>
<div class="a" style="left:347px;top:192px;width:22px;height:21px;overflow:hidden"><div class="t" style="left:6px;top:5px">通过</div></div>
<div class="a" style="left:46px;top:233px;width:323px;height:1px;background:#ececec"></div>
<div class="a" style="left:46px;top:234px;width:323px;height:19px;background:#fafafa"></div>
<div class="a" style="left:46px;top:253px;width:323px;height:1px;background:#ececec"></div>
<div class="a" style="left:46px;top:273px;width:323px;height:1px;background:#ececec"></div>
<div class="a" style="left:46px;top:274px;width:323px;height:19px;background:#fafafa"></div>
<div class="a" style="left:46px;top:293px;width:323px;height:1px;background:#ececec"></div>
<div class="a" style="left:46px;top:313px;width:323px;height:1px;background:#ececec"></div>
<div class="a" style="left:46px;top:314px;width:323px;height:19px;background:#fafafa"></div>
<div class="a" style="left:46px;top:333px;width:323px;height:1px;background:#ececec"></div>
<div class="a" style="left:46px;top:353px;width:323px;height:1px;background:#ececec"></div>
<div class="a" style="left:46px;top:354px;width:323px;height:19px;background:#fafafa"></div>
<div class="a" style="left:46px;top:373px;width:323px;height:1px;background:#ececec"></div>
<div class="a" style="left:46px;top:393px;width:323px;height:1px;background:#ececec"></div>
<div class="a" style="left:46px;top:394px;width:323px;height:19px;background:#fafafa"></div>
<div class="a" style="left:46px;top:413px;width:323px;height:1px;background:#ececec"></div>
<div class="a" style="left:46px;top:433px;width:323px;height:1px;background:#ececec"></div>
<div class="a" style="left:46px;top:434px;width:323px;height:19px;background:#fafafa"></div>
<div class="a" style="left:46px;top:453px;width:323px;height:1px;background:#ececec"></div>
<div class="a" style="left:46px;top:473px;width:323px;height:1px;background:#ececec"></div>
<div class="a" style="left:46px;top:474px;width:323px;height:19px;background:#fafafa"></div>
<div class="a" style="left:46px;top:493px;width:323px;height:1px;background:#ececec"></div>
<div class="a" style="left:46px;top:513px;width:323px;height:1px;background:#ececec"></div>
<div class="a" style="left:46px;top:514px;width:323px;height:19px;background:#fafafa"></div>
<div class="a" style="left:46px;top:533px;width:323px;height:1px;background:#ececec"></div>
<div class="a" style="left:46px;top:553px;width:323px;height:1px;background:#ececec"></div>
<div class="a" style="left:46px;top:554px;width:323px;height:19px;background:#fafafa"></div>
<div class="a" style="left:46px;top:573px;width:323px;height:1px;background:#ececec"></div>
<div class="a" style="left:46px;top:593px;width:323px;height:1px;background:#ececec"></div>
<div class="a" style="left:46px;top:594px;width:323px;height:19px;background:#fafafa"></div>
<div class="a" style="left:46px;top:613px;width:323px;height:1px;background:#ececec"></div>
<div class="a" style="left:46px;top:633px;width:323px;height:1px;background:#ececec"></div>
<div class="a" style="left:46px;top:634px;width:323px;height:19px;background:#fafafa"></div>
<div class="a" style="left:46px;top:653px;width:323px;height:1px;background:#ececec"></div>
<div class="a" style="left:46px;top:673px;width:323px;height:1px;background:#ececec"></div>
<div class="a" style="left:46px;top:674px;width:323px;height:19px;background:#fafafa"></div>
<div class="a" style="left:46px;top:693px;width:323px;height:1px;background:#ececec"></div>
<div class="a" style="left:46px;top:713px;width:323px;height:1px;background:#ececec"></div>
<div class="a" style="left:46px;top:714px;width:323px;height:19px;background:#fafafa"></div>
<div class="a" style="left:46px;top:733px;width:323px;height:1px;background:#ececec"></div>
<div class="a" style="left:46px;top:753px;width:323px;height:1px;background:#ececec"></div>
<div class="a" style="left:46px;top:754px;width:323px;height:19px;background:#fafafa"></div>
<div class="a" style="left:46px;top:773px;width:323px;height:1px;background:#ececec"></div>
<div class="a" style="left:46px;top:793px;width:323px;height:1px;background:#ececec"></div>
<div class="a" style="left:46px;top:794px;width:323px;height:19px;background:#fafafa"></div>
<div class="a" style="left:46px;top:813px;width:323px;height:1px;background:#ececec"></div>
<div class="a" style="left:46px;top:833px;width:323px;height:1px;background:#ececec"></div>
<div class="a" style="left:46px;top:834px;width:323px;height:19px;background:#fafafa"></div>
<div class="a" style="left:46px;top:853px;width:323px;height:1px;background:#ececec"></div>
<div class="a" style="left:46px;top:873px;width:323px;height:1px;background:#ececec"></div>
<div class="a" style="left:46px;top:874px;width:323px;height:19px;background:#fafafa"></div>
<div class="a" style="left:46px;top:893px;width:323px;height:1px;background:#ececec"></div>
<div class="a" style="left:296px;top:213px;width:1px;height:697px;background:#ececec"></div>
<div class="a" style="left:346px;top:213px;width:1px;height:697px;background:#ececec"></div>
<div class="a" style="left:174px;top:314px;width:72px;height:19px;background:#cde4ea"></div>
<div class="a" style="left:247px;top:314px;width:122px;height:19px;background:#cde4ea"></div>
<div class="a" style="left:246px;top:213px;width:1px;height:697px;background:#000"></div>
<div class="a" style="left:75px;top:234px;width:1px;height:106px;background-image:linear-gradient(#9a9a9a 50%,transparent 50%);background-size:1px 2px"></div>
<div class="a" style="left:61px;top:223px;width:6px;height:1px;background-image:linear-gradient(90deg,#9a9a9a 50%,transparent 50%);background-size:2px 1px"></div>
<div class="a" style="left:76px;top:243px;width:8px;height:1px;background-image:linear-gradient(90deg,#9a9a9a 50%,transparent 50%);background-size:2px 1px"></div>
<div class="a" style="left:80px;top:263px;width:5px;height:1px;background-image:linear-gradient(90deg,#9a9a9a 50%,transparent 50%);background-size:2px 1px"></div>
<div class="a" style="left:94px;top:269px;width:1px;height:10px;background-image:linear-gradient(#9a9a9a 50%,transparent 50%);background-size:1px 2px"></div>
<div class="a" style="left:99px;top:283px;width:5px;height:1px;background-image:linear-gradient(90deg,#9a9a9a 50%,transparent 50%);background-size:2px 1px"></div>
<div class="a" style="left:113px;top:289px;width:1px;height:10px;background-image:linear-gradient(#9a9a9a 50%,transparent 50%);background-size:1px 2px"></div>
<div class="a" style="left:118px;top:303px;width:5px;height:1px;background-image:linear-gradient(90deg,#9a9a9a 50%,transparent 50%);background-size:2px 1px"></div>
<div class="a" style="left:132px;top:309px;width:1px;height:15px;background-image:linear-gradient(#9a9a9a 50%,transparent 50%);background-size:1px 2px"></div>
<div class="a" style="left:132px;top:323px;width:10px;height:1px;background-image:linear-gradient(90deg,#9a9a9a 50%,transparent 50%);background-size:2px 1px"></div>
<div class="a" style="left:80px;top:343px;width:5px;height:1px;background-image:linear-gradient(90deg,#9a9a9a 50%,transparent 50%);background-size:2px 1px"></div>
<div class="a" style="left:52px;top:219px;width:9px;height:9px;border:1px solid #b8b8b8;background:#fff"></div><div class="a" style="left:54px;top:223px;width:5px;height:1px;background:#000"></div>
<div class="a" style="left:71px;top:259px;width:9px;height:9px;border:1px solid #b8b8b8;background:#fff"></div><div class="a" style="left:73px;top:263px;width:5px;height:1px;background:#000"></div>
<div class="a" style="left:90px;top:279px;width:9px;height:9px;border:1px solid #b8b8b8;background:#fff"></div><div class="a" style="left:92px;top:283px;width:5px;height:1px;background:#000"></div>
<div class="a" style="left:109px;top:299px;width:9px;height:9px;border:1px solid #b8b8b8;background:#fff"></div><div class="a" style="left:111px;top:303px;width:5px;height:1px;background:#000"></div>
<div class="a" style="left:71px;top:339px;width:9px;height:9px;border:1px solid #b8b8b8;background:#fff"></div><div class="a" style="left:73px;top:343px;width:5px;height:1px;background:#000"></div><div class="a" style="left:75px;top:341px;width:1px;height:5px;background:#000"></div>
<div class="t" style="left:69px;top:217px">GEOMETRY</div>
<svg style="left:85px;top:236px" width="16" height="15" viewBox="0 0 16 15"><path d="M1.500,2 H6 L7.500,3.500 H14.500 V13.500 H1.500 Z" fill="#f4f4f4" stroke="#444" stroke-width="1"/><path d="M6,7 H12 V11.500 H6 M8,9.200 H12" fill="none" stroke="#1b8ab8" stroke-width="1.300"/></svg>
<div class="t" style="left:104px;top:237px">未用项</div>
<svg style="left:85px;top:254px" width="17" height="17" viewBox="0 0 17 17"><path d="M2.500,1 V9" stroke="#2a8ab8" stroke-width="1.100"/><path d="M2.500,9 L9,4.500" stroke="#22b022" stroke-width="1.200"/><path d="M2.500,9 L11,14.500" stroke="#e02020" stroke-width="1.300"/><text x="5" y="5" font-family="Liberation Sans,sans-serif" font-size="5.500" font-weight="bold" fill="#222">z</text><text x="10.500" y="8" font-family="Liberation Sans,sans-serif" font-size="5.500" font-weight="bold" fill="#222">Y</text><text x="11" y="16.500" font-family="Liberation Sans,sans-serif" font-size="5.500" font-weight="bold" fill="#222">x</text></svg>
<div class="t" style="left:104px;top:257px">1</div>
<svg style="left:104px;top:274px" width="17" height="17" viewBox="0 0 17 17"><path d="M2.500,1 V9" stroke="#2a8ab8" stroke-width="1.100"/><path d="M2.500,9 L9,4.500" stroke="#22b022" stroke-width="1.200"/><path d="M2.500,9 L11,14.500" stroke="#e02020" stroke-width="1.300"/><text x="5" y="5" font-family="Liberation Sans,sans-serif" font-size="5.500" font-weight="bold" fill="#222">z</text><text x="10.500" y="8" font-family="Liberation Sans,sans-serif" font-size="5.500" font-weight="bold" fill="#222">Y</text><text x="11" y="16.500" font-family="Liberation Sans,sans-serif" font-size="5.500" font-weight="bold" fill="#222">x</text></svg>
<div class="t" style="left:123px;top:277px">MCS_LOCAL</div>
<svg style="left:122px;top:295px" width="17" height="16" viewBox="0 0 17 16"><path d="M1,6 L5,3 L8,4.500 V7 L10,8 V5 L13,3 L16,5 V11 L9,15 L1,11 Z" fill="#b4b4b4" stroke="#444" stroke-width=".9"/><path d="M1,6 L9,10 L16,5 M9,10 V15" fill="none" stroke="#444" stroke-width=".8"/></svg>
<div class="t" style="left:142px;top:297px">WORKPIECE</div>
<div class="a" style="left:149px;top:315px;width:2px;height:11px;background:#f08a10"></div><div class="a" style="left:149px;top:328px;width:2px;height:2px;background:#f08a10"></div>
<svg style="left:157px;top:315px" width="17" height="17" viewBox="0 0 17 17"><path d="M1.500,4 H6 V12 H15.500 V16 H1.500 Z" fill="#e0e0e0" stroke="#333" stroke-width="1"/><rect x="8.500" y="1" width="4" height="10" fill="#555"/><path d="M7,4.500 H15.500 M7,7 H15.500 M7,9.500 H15.500" stroke="#f08a10" stroke-width="1.200"/></svg>
<div class="t" style="left:176px;top:317px;font-weight:bold">CAVITY_...</div>
<svg style="left:251px;top:316px" width="16" height="15" viewBox="0 0 16 15"><path d="M1.500,8 L5.500,13 L14.500,1.500" fill="none" stroke="#22b422" stroke-width="1.700"/></svg>
<svg style="left:302px;top:316px" width="15" height="15" viewBox="0 0 15 15"><path d="M1,1 L14,14 M14,1 L1,14" stroke="#333" stroke-width="1.100"/></svg>
<svg style="left:85px;top:334px" width="18" height="18" viewBox="0 0 18 18"><path d="M1.500,6 H5 V16 H1.500 Z" fill="#888" stroke="#333" stroke-width=".8"/><path d="M5,6 L8,8 V16 H5 Z" fill="#ccc" stroke="#333" stroke-width=".8"/><path d="M6,9 V2 M4,4 L6,1.500 L8,4" fill="none" stroke="#e02020" stroke-width="1.200"/><path d="M6,11.500 H16 M13.500,9 L16.500,11.500 L13.500,14" fill="none" stroke="#1b9ac8" stroke-width="1.200"/></svg>
<div class="t" style="left:104px;top:337px">C-BASE</div>
<div class="a" style="left:47px;top:912px;width:321px;height:16px;background:#f0f0f0"></div>
<div class="a" style="left:64px;top:919px;width:18px;height:1px;background:#666"></div>

<div class="a" style="left:384px;top:126px;width:964px;height:25px;background:#fff"></div>
<div class="a" style="left:384px;top:151px;width:964px;height:2px;background:#00608c"></div>
<div class="a" style="left:383px;top:126px;width:1px;height:806px;background:#6e6e6e"></div>
<svg style="left:390px;top:131px" width="16" height="16" viewBox="0 0 16 16"><path d="M1.500,3 L6,1.500 V13 L1.500,14.500 Z M10,1.500 V13 L14.500,14.500 V3 Z" fill="none" stroke="#333" stroke-width="1"/><circle cx="5.500" cy="9" r="3" fill="#fff" stroke="#333" stroke-width="1"/><path d="M6,1.500 Q8,1 10,1.500" fill="none" stroke="#333"/></svg>
<div class="t" style="left:410px;top:132px">发现中心</div>
<svg style="left:485px;top:131px" width="16" height="16" viewBox="0 0 16 16"><path d="M1,10 L6,2 Q8,1 9,3 L9,8 L15,10.500 L15,12 L8,15 L1,12 Z" fill="#b8b8b8" stroke="#555" stroke-width=".9"/><ellipse cx="8" cy="11" rx="2.500" ry="1.300" fill="#eee" stroke="#555" stroke-width=".7"/></svg>
<div class="t" style="left:506px;top:132px">缝纫收纳盒<span style="letter-spacing:1.2px"> - </span>线卷<span style="letter-spacing:.6px">.prt</span></div>
<div class="a" style="left:645px;top:126px;width:108px;height:26px;background:#00608c"></div>
<svg style="left:651px;top:130px" width="16" height="18" viewBox="0 0 16 18"><path d="M1,16 V4 L3,2 H5 V10 H11 V2 H13 L15,8 V16 H12 V14 H5 L4,16 Z" fill="#d8d8d8" stroke="#333" stroke-width=".8"/><rect x="5.500" y="2" width="2.500" height="5" fill="#f07d10"/><rect x="9" y="1" width="2" height="4" fill="#f07d10"/><circle cx="11.500" cy="12.500" r="3.600" fill="#fff" stroke="#222" stroke-width=".9"/><path d="M9.800,12.500 L11,14 L13.300,11" fill="none" stroke="#222" stroke-width=".9"/></svg>
<div class="t" style="left:671px;top:132px;color:#fff">练习<span style="letter-spacing:.7px">.prt</span></div>
<svg style="left:721px;top:133px" width="12" height="12" viewBox="0 0 12 12"><path d="M6.500,1.500 H1.500 V10.500 H9.500 V7" fill="none" stroke="#fff" stroke-width="1.600"/><path d="M5,7 L10,2 M6.500,1.500 H10.500 V5.500" fill="none" stroke="#fff" stroke-width="1.500"/></svg>
<svg style="left:737px;top:134px" width="10" height="10" viewBox="0 0 10 10"><path d="M1,1 L9,9 M9,1 L1,9" stroke="#cfe3ec" stroke-width="2"/></svg>

<svg class="a" id="vp" style="left:384px;top:153px" width="964" height="779" viewBox="384 153 964 779">
<defs>
<linearGradient id="gA" x1="0" x2="1" y1="0" y2="0"><stop offset="0" stop-color="#8c8c8c"/><stop offset=".75" stop-color="#898989"/><stop offset=".92" stop-color="#787878"/><stop offset="1" stop-color="#6c6c6c"/></linearGradient>
<linearGradient id="gTop" x1="0" x2="1" y1="0" y2="0"><stop offset="0" stop-color="#727272"/><stop offset=".3" stop-color="#858585"/><stop offset="1" stop-color="#8e8e8e"/></linearGradient>
<linearGradient id="gDisc" gradientUnits="userSpaceOnUse" x1="1171" x2="1197" y1="0" y2="0"><stop offset="0" stop-color="#a4a4a4"/><stop offset=".25" stop-color="#c8c8c8"/><stop offset=".55" stop-color="#f8f8f8"/><stop offset=".75" stop-color="#ededed"/><stop offset="1" stop-color="#a0a0a0"/></linearGradient><linearGradient id="gFace" gradientUnits="userSpaceOnUse" x1="1150" x2="1176" y1="0" y2="0"><stop offset="0" stop-color="#8a8a8a"/><stop offset=".6" stop-color="#a2a2a2"/><stop offset="1" stop-color="#bcbcbc"/></linearGradient><linearGradient id="gNarrow" gradientUnits="userSpaceOnUse" x1="1170" x2="1215" y1="0" y2="0"><stop offset="0" stop-color="#666666"/><stop offset=".5" stop-color="#787878"/><stop offset="1" stop-color="#7e7e7e"/></linearGradient>
<linearGradient id="gFloor" x1="0" x2="1" y1="0" y2="0"><stop offset="0" stop-color="#7d7d7d"/><stop offset="1" stop-color="#8b8b8b"/></linearGradient>
<linearGradient id="gTab" x1="0" x2="0" y1="0" y2="1"><stop offset="0" stop-color="#ffffff"/><stop offset="1" stop-color="#d8e8ee"/></linearGradient>
<linearGradient id="gWall" x1="0" x2="1" y1="0" y2="0"><stop offset="0" stop-color="#5d5d5d"/><stop offset=".8" stop-color="#5f5f5f"/><stop offset="1" stop-color="#707070"/></linearGradient>
<clipPath id="cpS"><path d="M516,153 L1328,153 L1347,368 L1301.7,794.7 L1296.5,853.7 L1287,932 L1190.5,932 L1188,919.5 L960,905 L627,887 L621.5,915 L528.6,910 L525,875 L509,205 Z"/></clipPath>
</defs>
<rect x="384" y="153" width="964" height="779" fill="#fff"/>
<text y="925" font-size="16" fill="#8c8c8c" stroke="#ffffff" stroke-opacity="0" stroke-width="1" paint-order="stroke"><tspan x="1135" font-family="Liberation Mono, monospace" textLength="16" lengthAdjust="spacingAndGlyphs">UG</tspan><tspan x="1152" font-family="'Noto Serif CJK SC', serif" font-weight="300" font-style="italic" textLength="77" lengthAdjust="spacingAndGlyphs">爱好者论坛</tspan><tspan x="1238.400" font-family="Liberation Mono, monospace" textLength="104" lengthAdjust="spacingAndGlyphs">WWW.UGSNX.COM</tspan></text>
<!-- silhouette -->
<path d="M516,153 L1328,153 L1347,368 L1301.7,794.7 L1296.5,853.7 L1287,932 L1190.5,932 L1188,919.5 L960,905 L627,887 L621.5,915 L528.6,910 L525,875 L509,205 Z" fill="#5d5d5d"/>
<!-- top-left faces -->
<polygon points="516,153 573,153 577,205 509,205" fill="#727272"/>
<polygon points="573,153 681,153 686,205 577,205" fill="url(#gA)"/>
<polygon points="681,153 697.5,153 702.5,205 686,205" fill="#8c8c8c"/>
<polygon points="697.5,153 700.7,153 705.5,205 702.5,205" fill="#7c7c7c"/>
<g stroke="#3c3c3c" stroke-width=".8" fill="none"><path d="M573,153 L577,205 M681,153 L686,205 M682.500,153 L687.500,205 M697.500,153 L702.500,205 M700.700,153 L705.500,205 M819,153 L814,205"/></g>
<!-- spindle head -->
<polygon points="883,153 891,153 888,189 880,186" fill="#b0b0b0"/>
<polygon points="890.6,153 1031,153 1025.6,198.3 887.5,188.7" fill="#c1c1c1"/>
<path d="M888,190 q2,9 10,9 q7,0 11,-7" fill="#d0d0d0" stroke="#777" stroke-width=".7"/>
<polygon points="926,193 975,196 970,219 944,218 944,205 930,205" fill="#b4b4b4"/>
<polygon points="944,196 962,197 958,219 944,218" fill="#9a9a9a"/>
<path d="M944,218 L970,219 L975,196 M962,197 L958,219 M968,197 L965,212" stroke="#555" stroke-width=".7" fill="none"/>
<rect x="945" y="220" width="5" height="4" fill="#d9a400"/>
<!-- thin strip on wall -->
<polygon points="1063,153 1069.5,153 1049,340 1042.5,340" fill="#767676"/>
<path d="M1063,153 L1042.5,340 M1069.5,153 L1049,340" stroke="#4a4a4a" stroke-width=".6" fill="none"/>
<!-- wall right gradient zone next to block -->
<polygon points="1150,153 1199,153 1173,330 1171,430 1150,430" fill="url(#gWall)"/><path d="M1199,153 L1173,330 L1169,360" stroke="#444" stroke-width=".6" fill="none"/>
<!-- block left narrow face -->
<polygon points="1199,153 1218,361.3 1166,787 1152,660 1171,430 1173,330" fill="url(#gNarrow)"/>
<!-- block top face -->
<polygon points="1199,153 1328,153 1347,368 1218,361.3" fill="url(#gTop)"/>
<!-- bar on top face -->
<polygon points="1199,153 1209,153 1222.8,325 1224.6,335.4 1221,361.5 1218,361.3" fill="#707070"/>
<polygon points="1222,153 1230,153 1246,330 1237,336.5 1237.6,326.3" fill="#7c7c7c" opacity=".55"/>
<polygon points="1209,153 1222,153 1237.6,326.3 1222.8,325" fill="#8b8b8b"/>
<polygon points="1222.8,325 1237.6,326.3 1237,336.5 1224.6,335.4" fill="#5a5a5a"/>
<path d="M1209,153 L1222.800,325 L1224.600,335.400 L1237,336.500 L1237.600,326.300 L1222,153 M1222.800,325 L1237.600,326.300" stroke="#444" stroke-width=".6" fill="none"/>
<!-- block front face -->
<polygon points="1218,361.3 1347,368 1301.7,794.7 1166,787" fill="#5e5e5e"/>
<path d="M1199,153 L1218,361.3 L1347,368 M1218,361.3 L1166,787" stroke="#3a3a3a" stroke-width=".8" fill="none"/>
<!-- rail behind cradle -->
<polygon points="944,414 1160,425 1160,429 944,418" fill="#8a8a8a"/>
<polygon points="944,418 1160,429 1160,452 944,446" fill="#656565"/><path d="M944,418.300 L1160,429.300 M944,422.500 L1160,433.500" stroke="#4a4a4a" stroke-width=".6"/>
<!-- cradle mid-gray mass -->
<polygon points="944,444.7 1069.4,451.8 1136,451.8 1160,452 1175,560 1161,563 1150,690 1150,775 944,775" fill="url(#gFloor)"/>
<!-- dark pocket behind table -->
<polygon points="944,444.7 1069.4,451.8 1067.5,495 1040,520 944,520" fill="#5f5f5f"/>
<path d="M944,444.7 L1069.4,451.8 L1067.5,487" stroke="#3c3c3c" stroke-width=".6" fill="none"/>
<!-- inner right wall -->
<polygon points="1069.4,451.8 1136,451.8 1132.4,487.2 1110,510.8 1078,503.7 1067.5,487.2" fill="#7c7c7c"/>
<polygon points="1110,510.800 1132.4,487.200 1132.4,525 1117,567.5 1113.5,574.6 1102.9,513.2" fill="#767676"/>
<!-- lug behind table -->
<path d="M1041.5,503 q-.5,-14 7,-15.500 l24,.5 q6,1 5.500,9 l-1,9 l-18,4 Z" fill="#868686" stroke="#444" stroke-width=".6"/>
<path d="M1047,490 q1,8 5,10 q10,-5 20,-2 q2,-4 1,-9" fill="none" stroke="#444" stroke-width=".5"/>
<!-- cradle front face -->
<polygon points="1036.8,501.4 1102.9,513.2 1113.5,574.6 1006,588.7 944,600 944,560 1036,530" fill="#828282"/>
<path d="M1036.8,501.400 L1102.9,513.200 L1110,510.800" stroke="#d4d4d4" stroke-width="1" fill="none"/>
<path d="M1102.9,513.200 L1113.5,574.600 M1110,512 L1122,572" stroke="#444" stroke-width=".6" fill="none"/>
<!-- lip highlight -->
<polygon points="1006,588.7 1113.5,574.6 1119.4,570 1128.8,581.6 1113.5,591 963.6,607.6 944,612 944,600" fill="#949494"/>
<polygon points="1006,592 1113.5,578.500 1113.5,584 985,600" fill="#a6a6a6"/>
<!-- lower cradle dark body -->
<polygon points="963.6,607.6 1113.5,591 1128.8,581.6 1160.7,562.8 1147.7,605.3 1124.1,644.2 958.9,650.1" fill="#5e5e5e"/>
<polygon points="944,651.5 987,651.2 987,655 944,655" fill="#707070"/><polygon points="987,651.2 1091,647.7 1079,659.5 987,654.8" fill="#606060" stroke="#444" stroke-width=".5"/>
<path d="M963.6,607.600 L958.9,650.100 L1124.1,644.200 L1147.7,605.300 L1160.7,562.800 M963.6,607.600 L1113.5,591 L1128.8,581.600 L1160.7,562.800" stroke="#3a3a3a" stroke-width=".7" fill="none"/>
<!-- floor step -->
<linearGradient id="gStep" x1="0" x2="0" y1="0" y2="1"><stop offset="0" stop-color="#646464"/><stop offset="1" stop-color="#595959"/></linearGradient>
<linearGradient id="gSh" x1="0" x2="1" y1="0" y2="0"><stop offset="0" stop-color="#858585" stop-opacity="0"/><stop offset="1" stop-color="#5c5c5c"/></linearGradient>
<polygon points="1040,657 1061,660 1061.6,686 1040,685" fill="url(#gSh)"/>
<path d="M1061,659 L1061.600,686.500 M1063,660 L1063,686" stroke="#4a4a4a" stroke-width=".6"/>
<polygon points="944,680.8 1061.6,686.7 1150,689.5 1150,729 944,719.2" fill="url(#gStep)"/>
<path d="M944,680.800 L1061.600,686.700 L1150,689.500" stroke="#3c3c3c" stroke-width=".6" fill="none"/>
<!-- gap sliver between floor and block -->
<polygon points="1150,600 1188,600 1166.6,787 1159.5,785.8 1150,689" fill="#7b7b7b"/>
<path d="M1150,640 L1150,689 L1159.500,785.800" stroke="#444" stroke-width=".6" fill="none"/>
<!-- disc -->
<polygon points="1189.2,354.6 1176,365.6 1169.4,370 1165,383 1159.3,414 1156.2,440 1150,500 1148,560 1152.5,605.3 1161.9,572.2 1166.6,546.2 1171.5,502 1174.5,458 1174.7,414" fill="url(#gFace)"/>
<path d="M1189.2,354.600 C1194,366 1195.800,390 1195.800,414 C1195.800,436 1194.600,448 1194,458 C1192.600,474 1190.400,488 1189,502 C1188.400,518 1188.200,532 1187.900,546.200 C1186,560 1182,570 1178.400,581.600 L1167.800,621.800 L1152.500,605.300 L1161.900,572.200 C1164,562 1165.600,554 1166.600,546.200 C1168.400,530 1170,516 1171.500,502 C1172.800,488 1174,472 1174.500,458 C1174.900,444 1174.900,428 1174.700,414 C1174.700,396 1175,380 1176,365.600 Z" fill="url(#gDisc)"/>
<linearGradient id="gFade" gradientUnits="userSpaceOnUse" x1="0" x2="0" y1="500" y2="620"><stop offset="0" stop-color="#9a9a9a" stop-opacity="0"/><stop offset=".6" stop-color="#9a9a9a" stop-opacity=".75"/><stop offset="1" stop-color="#8c8c8c" stop-opacity=".95"/></linearGradient>
<polygon points="1189,502 1187.9,546.2 1178.4,581.6 1167.8,621.8 1152.5,605.3 1161.9,572.2 1166.6,546.2 1171.5,502" fill="url(#gFade)"/>
<path d="M1189.2,354.600 L1176,365.600 L1169.400,370 L1165,383 L1159.300,414 L1156.200,440 M1176,365.600 C1175,380 1174.700,396 1174.700,414 C1174.900,428 1174.900,444 1174.500,458 C1174,472 1172.800,488 1171.500,502 C1170,516 1168.400,530 1166.600,546.200 L1161.900,572.200 L1152.500,605.300 M1189.2,354.600 C1194,366 1195.800,390 1195.800,414 C1195.800,436 1194.600,448 1194,458 C1192.600,474 1190.400,488 1189,502 C1188.400,518 1188.200,532 1187.900,546.200 C1186,560 1182,570 1178.400,581.600 L1167.800,621.800" stroke="#4a4a4a" stroke-width=".6" fill="none"/>
<polygon points="1147.7,591 1176,595.8 1166.6,623 1152.5,614.7" fill="#7e7e7e" stroke="#444" stroke-width=".6"/>
<!-- cradle arm -->
<path d="M1137,452 Q1139,437 1146,436.500 L1162,436.500 Q1167,437 1166.800,444 L1166,480 L1150,487 L1147.700,527.300 L1126.500,577 L1117,567.500 L1132.400,525 L1135,470 Z" fill="#8c8c8c" stroke="#3c3c3c" stroke-width=".6"/><path d="M1150.500,437 L1152.500,466" stroke="#444" stroke-width=".6"/>
<path d="M1143,445 L1139,525 L1122,572" stroke="#a8a8a8" stroke-width="1.500" fill="none"/>
<polygon points="1144.2,463.6 1160.7,464.8 1159.5,486 1143,487.2" fill="#5a5a5a" stroke="#333" stroke-width=".6"/>
<polygon points="1144.2,463.600 1160.7,464.800 1160,470 1144,469" fill="#7a7a7a"/>
<!-- table -->
<g>
<ellipse cx="930" cy="533" rx="112" ry="60" fill="#585858" transform="rotate(3 930 533)"/>
<ellipse cx="930" cy="530" rx="111" ry="59" fill="#c3d6dd" transform="rotate(3 930 530)"/>
<ellipse cx="930" cy="513" rx="111" ry="59" fill="url(#gTab)" stroke="#667" stroke-width=".5" transform="rotate(3 930 513)"/>
<g stroke="#5a6063" stroke-width="1.2" fill="none">
<path d="M944,468 L1003,473.5 M944,479 L1018,486 M944,490 L1028,498 M944,500.5 L1034,509 M944,522 L1038,531 M944,532.5 L1034,541.5 M944,543 L1024,551 M944,553.5 L1008,560"/>
</g>
<g stroke="#fff" stroke-width="1" fill="none" opacity=".8">
<path d="M944,470 L1003,475.5 M944,481 L1018,488 M944,492 L1028,500 M944,524 L1038,533 M944,534.5 L1034,543.5 M944,545 L1024,553"/>
</g>
<rect x="944" y="466" width="7" height="38" fill="#e6c4c4" stroke="#b08a8a" stroke-width=".6"/>
<rect x="944" y="490" width="3.500" height="26" fill="#e09a20"/>
<polyline points="944,450 1005,452.9 998,507.8 995,473.5 944,470.5" fill="none" stroke="#1010f0" stroke-width="1"/>
<line x1="944" y1="444" x2="944" y2="448" stroke="#00b000" stroke-width="2"/>
<line x1="944" y1="506" x2="1020" y2="510" stroke="#e02020" stroke-width="1.6"/>
<polygon points="1015,506 1036,511.5 1015,514" fill="#e83030"/>
<line x1="1034" y1="511.2" x2="1052" y2="512.2" stroke="#2020ff" stroke-width="1"/>
<polygon points="1049,508 1064,513 1049,516" fill="#1010f0"/>
<polygon points="955,509 977,513 955,516" fill="#e8a560"/>
<line x1="944" y1="512.5" x2="957" y2="512.5" stroke="#c08040" stroke-width="1"/>
<text x="1066" y="518.5" font-family="Liberation Sans, sans-serif" font-size="14" fill="#1010f0">X</text>
<text x="1018" y="527" font-family="Liberation Sans, sans-serif" font-size="12" fill="#e02020">XM</text>
<text x="970" y="528" font-family="Liberation Sans, sans-serif" font-size="10" fill="#c8b8b0">X</text>
</g>
<!-- beams -->
<polygon points="600,758 944.7,776.4 1301.7,794.7 1296.5,853.7 944.7,829.5 600,812" fill="#5b5b5b"/>
<polygon points="944,831 1296.5,851 1296.5,854 1271.4,856.7 944,840" fill="#727272"/>
<polygon points="627,820 944,840 1271.4,856.7 1265,915.7 960,905 627,887" fill="#5a5a5a"/>
<polygon points="1271.4,856.7 1296.5,853.7 1287,932 1264,932 1265,915.7" fill="#636363"/>
<path d="M944,776.400 L1301.7,794.700 M944,829.500 L1296,851 M944,840 L1271.4,856.700 L1265,915.700" stroke="#3a3a3a" stroke-width=".7" fill="none"/>
<!-- legs -->
<polygon points="525,875 627.5,882 621.5,915 528.6,910" fill="#5c5c5c" stroke="#444" stroke-width=".6"/>
<path d="M1328,153 L1347,368 L1301.700,794.700 L1296.500,853.700 L1287,932 M1190.500,932 L1188,919.500 L960,905 L627,887 M516,153 L509,205" fill="none" stroke="#3a3a3a" stroke-width=".7"/>
<!-- watermark -->
<text clip-path="url(#cpS)" y="925" font-size="16" fill="#bdbdbd" stroke="#ffffff" stroke-opacity=".35" stroke-width="1" paint-order="stroke"><tspan x="1135" font-family="Liberation Mono, monospace" textLength="16" lengthAdjust="spacingAndGlyphs">UG</tspan><tspan x="1152" font-family="'Noto Serif CJK SC', serif" font-weight="300" font-style="italic" textLength="77" lengthAdjust="spacingAndGlyphs">爱好者论坛</tspan><tspan x="1238.400" font-family="Liberation Mono, monospace" textLength="104" lengthAdjust="spacingAndGlyphs">WWW.UGSNX.COM</tspan></text>
</svg>

<div class="a" id="dlg"></div>
<div class="t teal" style="left:344px;top:212px">执行视图</div>
<div class="dd" style="left:873px;top:216px;border-left-width:4px;border-right-width:4px;border-top-width:4px"></div>
<div class="a" style="left:896px;top:213px;width:12px;height:11px;border:1px solid #000;border-top-width:2px"></div>
<svg style="left:923px;top:211px" width="13" height="13" viewBox="0 0 13 13"><path d="M1.2,1.2 L11.8,11.8 M11.8,1.2 L1.2,11.8" stroke="#000" stroke-width="1.8" fill="none"/></svg>
<div class="a" style="left:339px;top:232px;width:604px;height:634px;border:1px solid #adadad;background:#fff"></div>
<!-- group 1 -->
<div class="grp" style="left:347px;top:239px;width:588px;height:25px"></div>
<div class="a" style="left:358px;top:247px;width:0;height:0;border-top:4px solid transparent;border-bottom:4px solid transparent;border-left:4px solid #17658a"></div>
<div class="gh" style="left:370px;top:244px">状态</div>
<!-- group 2 -->
<div class="grp" style="left:347px;top:275px;width:588px;height:257px"></div>
<div class="a" style="left:356px;top:285px;width:0;height:0;border-left:4px solid transparent;border-right:4px solid transparent;border-top:4px solid #17658a"></div>
<div class="gh" style="left:370px;top:280px">NC</div><div class="gh" style="left:395px;top:280px">程序</div><div class="gh" style="left:427px;top:280px">-</div><div class="gh" style="left:436px;top:280px">练习.H</div><div class="gh" style="left:489px;top:280px">(不可编辑)</div>
<div class="a" style="left:356px;top:306px;width:570px;height:217px;border:1px solid #5a5a5a;background:#fff"></div>
<div class="a" style="left:357px;top:307px;width:40px;height:171px;background:#e9e9e9"></div>
<div class="a" style="left:909px;top:307px;width:16px;height:171px;background:#f7f7f7"></div>
<div class="a" style="left:357px;top:478px;width:568px;height:1px;background:#cfcfcf"></div>
<div class="a" style="left:911px;top:312px;width:0;height:0;border-left:5px solid transparent;border-right:5px solid transparent;border-bottom:6px solid #8a8a8a"></div>
<div class="a" style="left:911px;top:466px;width:0;height:0;border-left:5px solid transparent;border-right:5px solid transparent;border-top:6px solid #8a8a8a"></div>
<div class="a" style="left:359px;top:406px;width:0;height:0;border-left:5.5px solid transparent;border-right:5.5px solid transparent;border-top:11px solid #1fc41f"></div>
<div class="a code" style="left:357px;top:308px;width:35px;height:170px;text-align:right;color:#222">9
10
11
12
13
14
15
16
17
18
19
20</div>
<div class="a code" id="code" style="left:401px;top:308px;width:506px;height:170px;overflow:hidden;color:#111"><b>6</b> M5
<b>7</b> M140 MB MAX
<b>8</b> L ZQ<b>503</b> R<b>0</b> FMAX M91
<b>9</b> L XQ<b>501</b> YQ<b>502</b> R<b>0</b> FMAX M91
<b>10</b> L A<b>0.</b> C<b>0.</b> FMAX
<b>11</b> TOOL CALL <b>1</b> Z S<b>1061</b> DL0. DR<b>0.</b>
<b>12</b> M3 M8
<b>13</b> CYCL DEF <b>247</b> DATUM SETTING Q<b>339</b>=<b>1</b> <i>; DATUM NUMBER</i>
<b>14</b> M140 MB MAX
<b>15</b> PLANE SPATIAL SPA<b>0.</b> SPB<b>0.</b> SPC<b>0.</b> TURN FMAX SEQ-
<b>16</b> L X<b>48.5297</b> Y-<b>10.</b> Z<b>142.5467</b> R<b>0</b> FMAX
<b>17</b> L X<b>41.6258</b> Z<b>138.5607</b> FMAX</div>
<div class="t" style="left:365px;top:495px;font-size:13px;word-spacing:1.400px">执行后处理 - 行数:</div>
<div class="a" style="left:784px;top:488px;width:73px;height:26px;border:1px solid #7a7a7a;background:#fff"></div>
<div class="t" style="left:829px;top:494px;color:#7a7a7a">全部</div>
<div class="a" style="left:861px;top:485px;width:32px;height:32px;border:1px solid #666;background:#fff"></div>
<svg style="left:861px;top:485px" width="32" height="32" viewBox="0 0 32 32"><path d="M11.800,4.600 H4.500 V9.700 H11.800 V14.600 H4.500 V19.800 H11.800 V24.700 H4.200" stroke="#444" stroke-width="1.100" fill="none"/><path d="M24.800,15.800 V13.600 H15.500 V27.800 H24.800 V25.300 M18.200,20.700 H28 M24.300,17.200 L28,20.700 L24.300,24" stroke="#444" stroke-width="1.100" fill="none"/></svg>
<svg style="left:896px;top:488px" width="25" height="25" viewBox="0 0 25 25"><circle cx="12.5" cy="12.5" r="11.3" fill="#fff" stroke="#444" stroke-width="1.1"/><path d="M8.6,10 Q8.6,6 12.6,6 Q16.6,6 16.6,9.6 Q16.6,12 13.6,13.6 Q12.6,14.4 12.6,17" stroke="#444" stroke-width="1.2" fill="none"/><circle cx="12.6" cy="20" r=".9" fill="#444"/></svg>
<!-- group 3 -->
<div class="grp" style="left:347px;top:541px;width:588px;height:111px"></div>
<div class="a" style="left:356px;top:550px;width:0;height:0;border-left:4px solid transparent;border-right:4px solid transparent;border-top:4px solid #17658a"></div>
<div class="gh" style="left:370px;top:545px">调用堆栈</div>
<div class="a" style="left:356px;top:571px;width:570px;height:72px;border:1px solid #d2d2d2;background:#fff"></div>
<div class="a" style="left:358px;top:573px;width:566px;height:19px;background:#cde4ea"></div>
<div class="a" style="left:358px;top:593px;width:566px;height:19px;background:#fafafa;border-bottom:1px solid #ebebeb"></div>
<div class="a" style="left:358px;top:613px;width:566px;height:20px;border-bottom:1px solid #ebebeb"></div>
<div class="a" style="left:358px;top:633px;width:566px;height:9px;background:#fafafa"></div>
<div class="t" style="left:361px;top:576px;letter-spacing:.6px">Main</div>
<!-- group 4 -->
<div class="grp" style="left:347px;top:661px;width:588px;height:196px"></div>
<div class="a" style="left:356px;top:670px;width:0;height:0;border-left:4px solid transparent;border-right:4px solid transparent;border-top:4px solid #17658a"></div>
<div class="gh" style="left:370px;top:666px">变量</div>
<div class="a" style="left:356px;top:691px;width:542px;height:157px;border:1px solid #d2d2d2;background:#fff"></div>
<div class="a" style="left:358px;top:693px;width:538px;height:20px;background:#f0f0f0;border-bottom:1px solid #cdcdcd"></div>
<div class="a" style="left:358px;top:733px;width:538px;height:21px;background:#fafafa;border-top:1px solid #ebebeb;border-bottom:1px solid #ebebeb"></div>
<div class="a" style="left:358px;top:773px;width:538px;height:21px;background:#fafafa;border-top:1px solid #ebebeb;border-bottom:1px solid #ebebeb"></div>
<div class="a" style="left:358px;top:813px;width:538px;height:21px;background:#fafafa;border-top:1px solid #ebebeb;border-bottom:1px solid #ebebeb"></div>
<div class="a" style="left:457px;top:693px;width:1px;height:154px;background:#e2e2e2"></div>
<div class="a" style="left:557px;top:693px;width:1px;height:154px;background:#e2e2e2"></div>
<div class="a" style="left:707px;top:693px;width:1px;height:154px;background:#e2e2e2"></div>
<div class="t" style="left:364px;top:697px">名称</div>
<div class="t" style="left:464px;top:697px">值</div>
<div class="t" style="left:563px;top:697px">类型</div>
<div class="a" style="left:902px;top:691px;width:24px;height:24px;border:1px solid #666;background:#fff"></div>
<svg style="left:902px;top:691px" width="24" height="24" viewBox="0 0 24 24"><circle cx="11.7" cy="11.7" r="7.2" fill="none" stroke="#222" stroke-width="1.1"/><path d="M7.2,11.7 H16.2 M11.7,7.2 V16.2" stroke="#222" stroke-width="1.1"/></svg>
<div class="a" style="left:902px;top:717px;width:24px;height:24px;border:1px solid #666;background:#fff"></div>
<svg style="left:902px;top:717px" width="24" height="24" viewBox="0 0 24 24"><path d="M5,5 L19,19 M19,5 L5,19" stroke="#333" stroke-width="1.1"/></svg>
<!-- grip -->
<div class="a" style="left:941px;top:868px;width:2px;height:2px;background:#999"></div>
<div class="a" style="left:937px;top:872px;width:2px;height:2px;background:#999"></div>
<div class="a" style="left:941px;top:872px;width:2px;height:2px;background:#999"></div>

<div class="a" style="left:829px;top:329px;width:261px;height:115px;background:#f0f0f0;border:1px solid #b4b4b4;border-top:none"></div>
<div class="a" style="left:829px;top:329px;width:261px;height:28px;background:#00608c"></div>
<div class="t" style="left:837px;top:337px;color:#fff">机床仿真</div>
<div class="a" style="left:844px;top:368px;width:30px;height:30px;background:#ee1c2e;border:1px solid #c01020"></div>
<svg style="left:844px;top:368px" width="30" height="30" viewBox="0 0 30 30"><path d="M6,6 L24,24 M24,6 L6,24" stroke="#fff" stroke-width="1.800"/></svg>
<div class="t" id="msgtxt" style="left:890px;top:375px;font-family:'DejaVu Sans','Liberation Sans',sans-serif;font-size:11.500px;letter-spacing:.12px;color:#111">Program name '247' not found.</div>
<div class="a" style="left:928px;top:406px;width:63px;height:25px;border:1px solid #1e6a8e;background:#f4f4f4"></div>
<div class="c teal" style="left:959.500px;top:412px">确定(<span style="text-decoration:underline">O</span>)</div>

</body>
</html>
